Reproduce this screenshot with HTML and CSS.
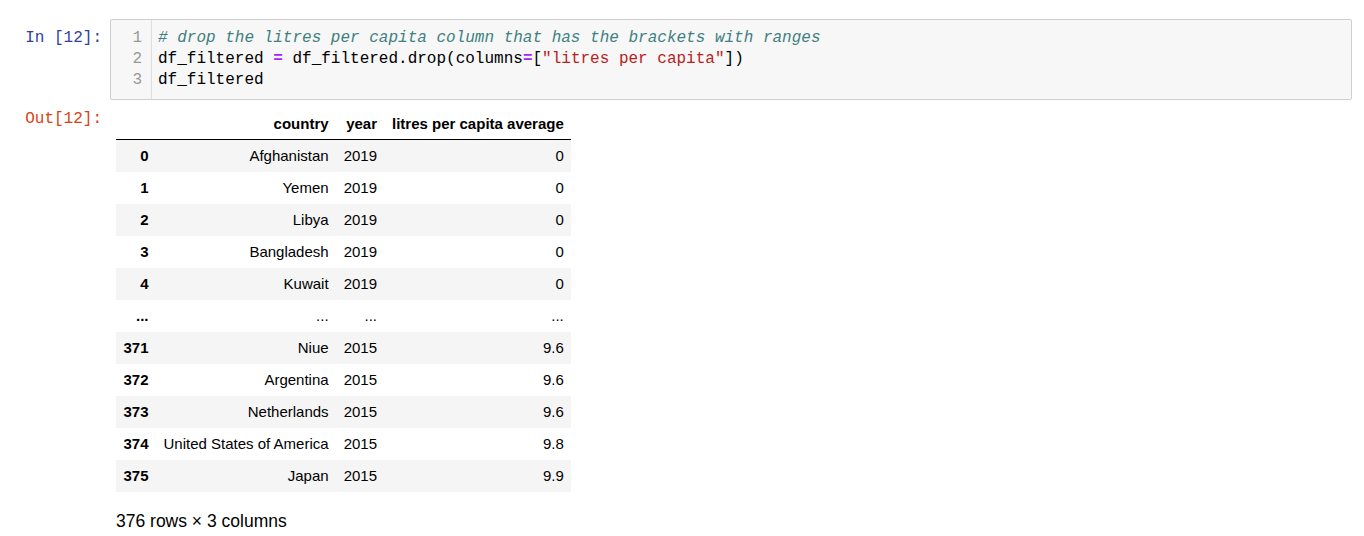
FILE: index.html
```html
<!DOCTYPE html>
<html>
<head>
<meta charset="utf-8">
<link rel="stylesheet" href="styles.css">
</head>
<body>
<div class="notebook">
  <div class="cell">
    <div class="input">
      <div class="prompt prompt-in">In&nbsp;[12]:</div>
      <div class="editor">
        <div class="gutter">
          <div class="ln">1</div>
          <div class="ln">2</div>
          <div class="ln">3</div>
        </div>
        <div class="code">
          <div class="line"><span class="cm">#&nbsp;drop&nbsp;the&nbsp;litres&nbsp;per&nbsp;capita&nbsp;column&nbsp;that&nbsp;has&nbsp;the&nbsp;brackets&nbsp;with&nbsp;ranges</span></div>
          <div class="line">df_filtered&nbsp;<span class="op">=</span>&nbsp;df_filtered.drop(columns<span class="op">=</span>[<span class="str">"litres&nbsp;per&nbsp;capita"</span>])</div>
          <div class="line">df_filtered</div>
        </div>
      </div>
    </div>
    <div class="output">
      <div class="prompt prompt-out">Out[12]:</div>
      <div class="output-sub">
        <table class="dataframe">
          <thead>
            <tr><th></th><th>country</th><th>year</th><th>litres per capita average</th></tr>
          </thead>
          <tbody>
            <tr><th>0</th><td>Afghanistan</td><td>2019</td><td>0</td></tr>
            <tr><th>1</th><td>Yemen</td><td>2019</td><td>0</td></tr>
            <tr><th>2</th><td>Libya</td><td>2019</td><td>0</td></tr>
            <tr><th>3</th><td>Bangladesh</td><td>2019</td><td>0</td></tr>
            <tr><th>4</th><td>Kuwait</td><td>2019</td><td>0</td></tr>
            <tr><th>...</th><td>...</td><td>...</td><td>...</td></tr>
            <tr><th>371</th><td>Niue</td><td>2015</td><td>9.6</td></tr>
            <tr><th>372</th><td>Argentina</td><td>2015</td><td>9.6</td></tr>
            <tr><th>373</th><td>Netherlands</td><td>2015</td><td>9.6</td></tr>
            <tr><th>374</th><td>United States of America</td><td>2015</td><td>9.8</td></tr>
            <tr><th>375</th><td>Japan</td><td>2015</td><td>9.9</td></tr>
          </tbody>
        </table>
        <p class="shape">376 rows × 3 columns</p>
      </div>
    </div>
  </div>
</div>
</body>
</html>
```

FILE: styles.css
```css
html, body {
  margin: 0;
  padding: 0;
  background: #ffffff;
}

body {
  font-family: "Liberation Sans", Arial, sans-serif;
  color: #000000;
}

.notebook {
  padding: 19px 12px 0 0;
}

.input,
.output {
  display: flex;
  align-items: flex-start;
}

.prompt {
  flex: 0 0 110px;
  box-sizing: border-box;
  text-align: right;
  padding-right: 8px;
  font-family: "Liberation Mono", "DejaVu Sans Mono", monospace;
  font-size: 16px;
  line-height: 21px;
}

.prompt-in {
  color: #303f9f;
  padding-top: 9px;
}

.prompt-out {
  color: #d84315;
  padding-top: 9px;
}

.editor {
  flex: 1 1 auto;
  display: flex;
  background: #f7f7f7;
  border: 1px solid #cfcfcf;
  border-radius: 2px;
  font-family: "Liberation Mono", "DejaVu Sans Mono", monospace;
  font-size: 16px;
  line-height: 21px;
}

.gutter {
  flex: 0 0 41px;
  box-sizing: border-box;
  border-right: 1px solid #dddddd;
  padding: 8px 9px 8px 0;
  text-align: right;
  color: #999999;
}

.code {
  flex: 1 1 auto;
  padding: 8px 6px 8px 6px;
  color: #000000;
  white-space: nowrap;
}

.cm {
  color: #408080;
  font-style: italic;
}

.op {
  color: #aa22ff;
  font-weight: bold;
}

.str {
  color: #ba2121;
}

.output-sub {
  padding: 7px 0 0 6px;
}

.dataframe {
  border-collapse: collapse;
  border-spacing: 0;
  font-size: 15px;
  color: #000000;
}

.dataframe thead {
  border-bottom: 1px solid #000000;
}

.dataframe th,
.dataframe td {
  padding: 7.5px;
  line-height: 17px;
  text-align: right;
  vertical-align: middle;
  white-space: nowrap;
}

.dataframe th {
  font-weight: bold;
}

.dataframe thead th {
  vertical-align: bottom;
  padding-bottom: 7px;
}

.dataframe tbody tr:nth-child(odd) {
  background: #f5f5f5;
}

.shape {
  margin: 17px 0 0 0;
  font-size: 17.5px;
  line-height: 25px;
}
```
